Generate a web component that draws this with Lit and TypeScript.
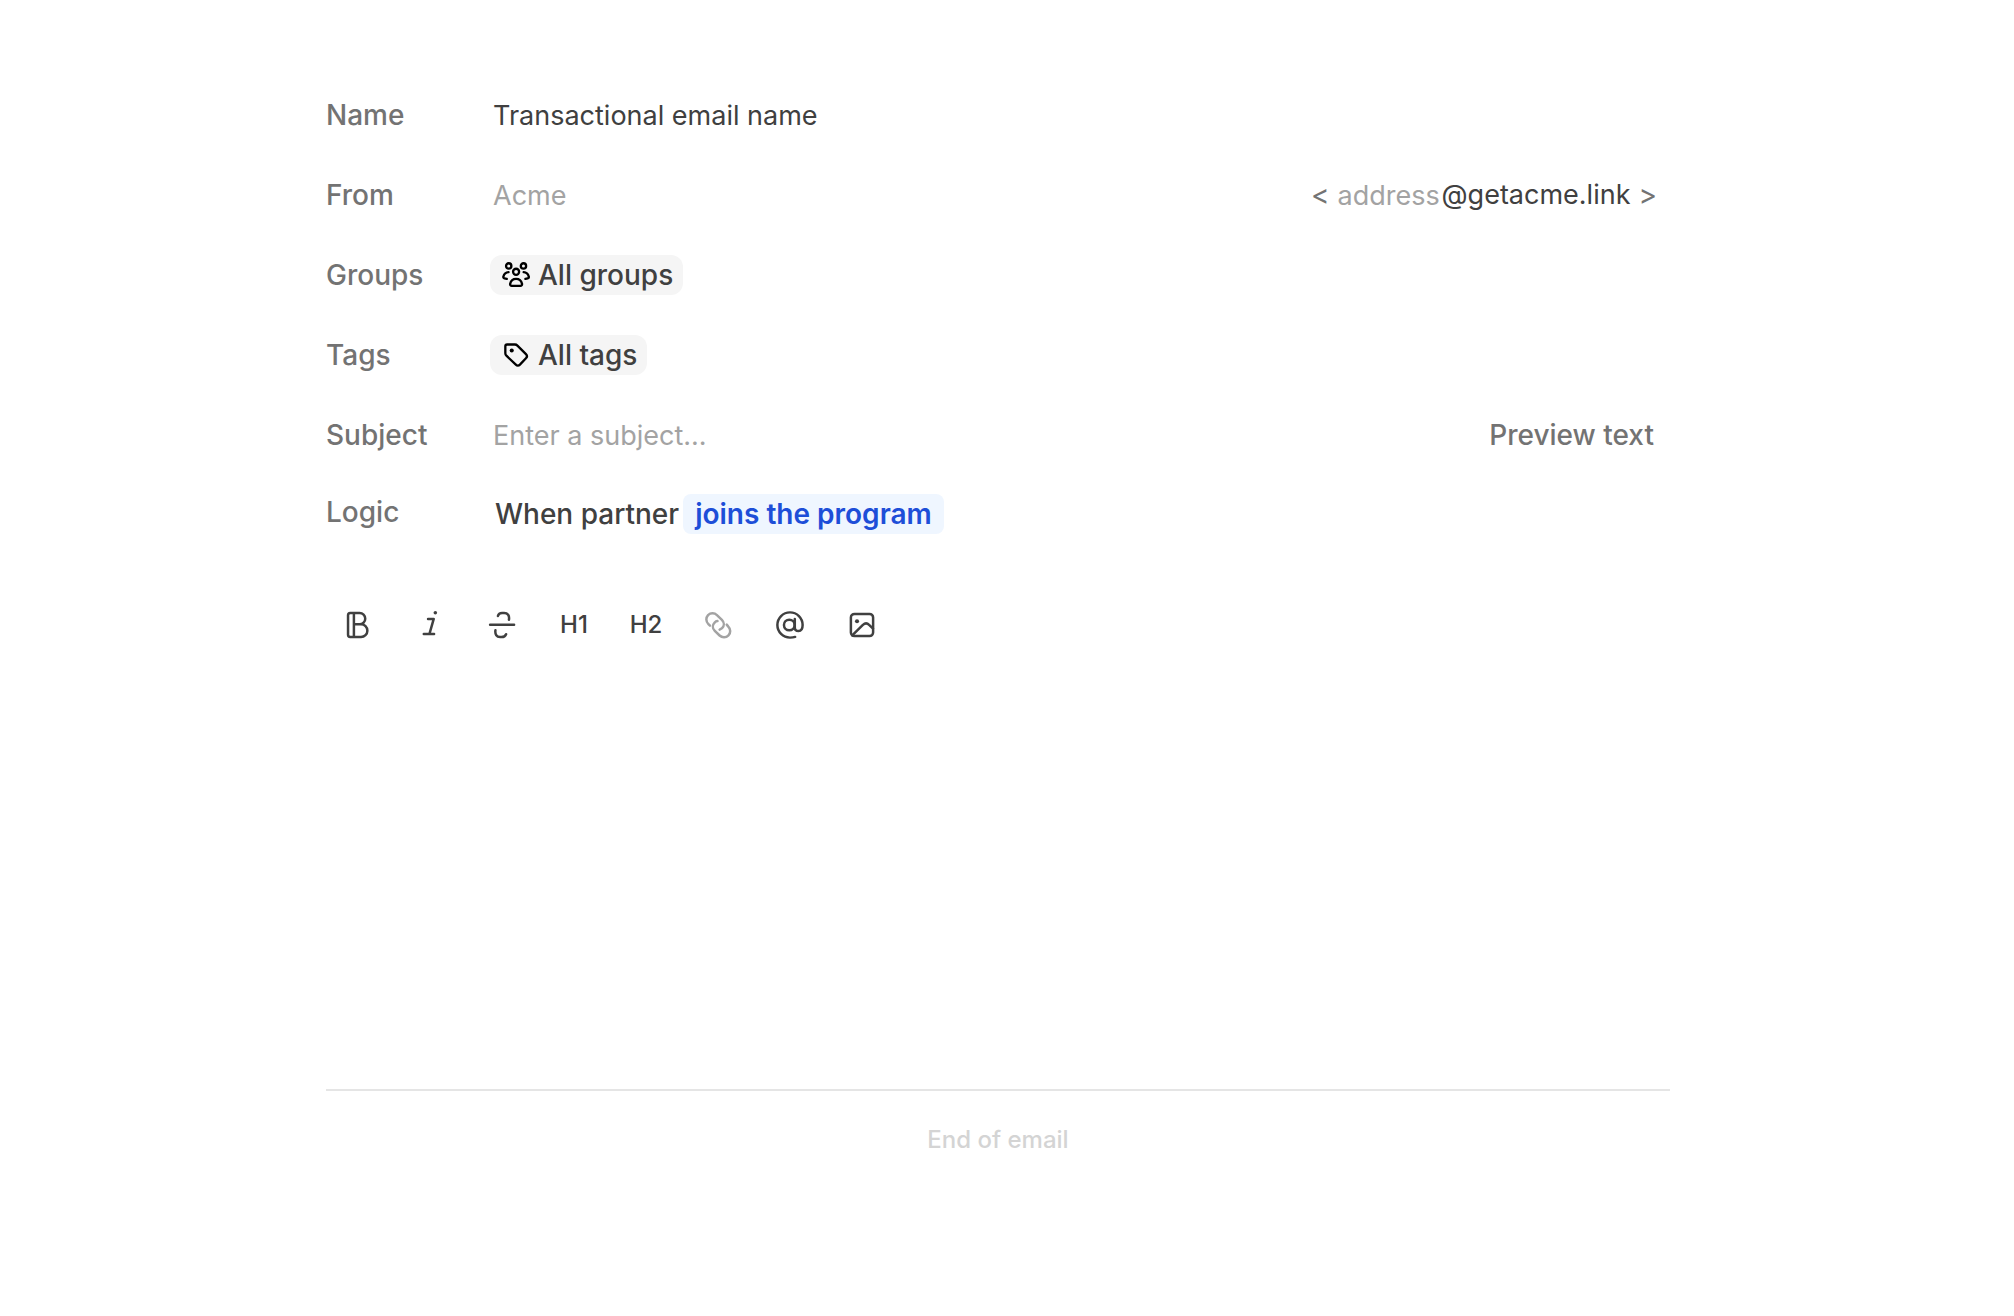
import { LitElement, html, css, svg } from "lit";
import { customElement, property } from "lit/decorators.js";

const icons: Record<string, unknown> = {
  bold: svg`<path d="M6.7 8.6H9.9A3.17 3.17 0 0 0 9.9 2.25H4.6A1.25 1.25 0 0 0 3.4 3.5V14.5A1.25 1.25 0 0 0 4.6 15.75H10.7A3.57 3.57 0 0 0 10.7 8.6H9.9M6.7 2.25V15.75" />`,
  italic: svg`<path d="M7.9 5.6H11.1L8.7 14M5.5 14.1H11.3" /><circle class="fill" cx="12" cy="2.1" r="1" />`,
  strike: svg`<path d="M2.3 8.8H15.8M6.7 3.9C7 2.7 7.8 2.2 9 2.2H10.2C12.2 2.2 13.3 3.7 12.9 6M5.3 12C5 14.4 6 15.8 7.9 15.8H8.7C10.1 15.8 10.9 15.3 11.3 14.2" />`,
  link: svg`<path d="M4.5 9.4L3.6 8.5C2.1 7 2.1 4.8 3.4 3.4C4.8 2.1 7 2.1 8.4 3.4L11.2 6.1C12.6 7.5 12.6 9.5 11.3 10.8C10.9 11.2 10.4 11.4 9.9 11.6M8.7 6.8C8 6.9 7.5 7.2 7.1 7.6C5.8 8.9 5.8 10.9 7.2 12.3L9.9 14.9C11.3 16.2 13.5 16.2 14.9 14.8C16.2 13.5 16.2 11.3 14.8 9.9L13.9 8.8" />`,
  at: svg`<circle cx="8.6" cy="9" r="3" /><path d="M11.7 5.6V10.2C11.7 11.5 12.5 12.4 13.8 12.4C15.2 12.4 16.1 11.1 16.1 9A7.1 7.1 0 1 0 9 16.1C10 16.1 11 16 11.9 15.7" />`,
  image: svg`<rect x="2.75" y="2.75" width="12.5" height="12.5" rx="2" /><path d="M3.5 14.9L9.5 8.9C10.6 7.9 12 7.9 13 8.9L15.2 11" /><circle class="fill" cx="6.2" cy="6.9" r="1.15" />`,
  groups: svg`<circle cx="4.9" cy="3.9" r="1.5" /><circle cx="13.2" cy="3.9" r="1.5" /><circle cx="9.05" cy="7.2" r="1.7" /><path d="M5.7 14C6.1 12.3 7.4 11.2 9.05 11.2S12 12.3 12.4 14C12.5 14.7 12.1 15.1 11.5 15.1H6.6C6 15.1 5.6 14.7 5.7 14ZM4.8 7.4C3.4 7.5 2.3 8.5 1.9 9.9C1.8 10.4 2 10.8 2.5 10.9L3.8 11.2M13.3 7.4C14.7 7.5 15.8 8.5 16.2 9.9C16.3 10.4 16.1 10.8 15.6 10.9L14.3 11.2" />`,
  tag: svg`<path d="M3 4.1A1 1 0 0 1 4 3.1H8.4C9 3.1 9.4 3.3 9.8 3.7L14.6 8.5C15.3 9.2 15.3 10.1 14.6 10.8L11.2 14.4C10.5 15.1 9.6 15.1 8.9 14.4L3.6 9.4C3.2 9 3 8.6 3 8Z" /><circle class="fill" cx="6.6" cy="6.5" r="1.15" />`,
};

@customElement("app-icon")
class AppIcon extends LitElement {
  @property() name = "";
  static styles = css`
    :host {
      display: block;
      flex: none;
      width: 32px;
      height: 32px;
      stroke-width: 1.4;
    }
    svg {
      display: block;
      width: 100%;
      height: 100%;
      fill: none;
      stroke: currentColor;
      stroke-linecap: round;
      stroke-linejoin: round;
      overflow: visible;
    }
    .fill {
      fill: currentColor;
      stroke: none;
    }
  `;
  render() {
    return html`<svg viewBox="0 0 18 18" aria-hidden="true">${icons[this.name]}</svg>`;
  }
}

@customElement("app-root")
class AppRoot extends LitElement {
  static styles = css`
    :host {
      display: block;
      min-height: 100vh;
      background: #fff;
      color: #404040;
      font: 400 28px/40px Inter, "Liberation Sans", sans-serif;
    }
    * {
      box-sizing: border-box;
    }
    .page {
      max-width: 1362px;
      margin: 0 auto;
      padding: 75px 18px 0 0;
    }
    .row {
      display: grid;
      grid-template-columns: 164px 1fr auto;
      align-items: center;
      height: 80px;
      padding-right: 13px;
    }
    .row.logic {
      height: 78px;
    }
    .label {
      color: #737373;
      font-weight: 500;
    }
    .logic .label {
      padding-bottom: 5px;
    }
    button,
    input {
      margin: 0;
      border: 0;
      padding: 0;
      background: none;
      color: inherit;
      font: inherit;
    }
    button {
      cursor: pointer;
    }
    input {
      width: 100%;
      min-width: 0;
      height: 40px;
      padding: 2px 0 0 3px;
      outline: none;
      font-size: 27px;
    }
    input::placeholder {
      color: #a3a3a3;
      opacity: 1;
    }
    .chip {
      display: flex;
      align-items: center;
      justify-self: start;
      gap: 6px;
      height: 40px;
      padding: 0 10px;
      border-radius: 12px;
      background: #f5f5f5;
      font-weight: 500;
    }
    .chip app-icon {
      color: #000;
      stroke-width: 1.3;
    }
    .address {
      display: flex;
      align-items: center;
      gap: 8px;
      color: #737373;
    }
    .mail {
      display: flex;
      color: #404040;
      font-size: 27px;
    }
    .mail input {
      width: 104px;
      padding-left: 0;
    }
    .preview {
      padding-right: 3px;
      color: #737373;
      font-weight: 500;
    }
    .rule {
      display: flex;
      align-items: center;
      gap: 4px;
      padding-left: 5px;
      font-weight: 500;
    }
    .trigger {
      height: 40px;
      padding: 0 12px;
      border-radius: 8px;
      background: #eff6ff;
      color: #1d4ed8;
      font-weight: 600;
    }
    .tools {
      display: flex;
      gap: 16px;
      margin-top: 44px;
      padding-left: 4px;
    }
    .tool {
      display: grid;
      place-items: center;
      width: 56px;
      height: 56px;
      font-size: 24px;
      font-weight: 500;
    }
    .tool:disabled {
      color: #a3a3a3;
    }
    .editor {
      height: 436px;
      outline: none;
    }
    .end {
      border-top: 2px solid #e5e5e5;
      padding-top: 29px;
      color: #d4d4d4;
      font-size: 24px;
      font-weight: 500;
      text-align: center;
    }
  `;

  render() {
    const tool = (name: string, label: string, disabled = false) => html`
      <button class="tool" type="button" aria-label=${label} ?disabled=${disabled}>
        <app-icon name=${name}></app-icon>
      </button>
    `;
    return html`
      <main class="page">
        <div class="row">
          <label class="label" for="name">Name</label>
          <input id="name" type="text" value="Transactional email name" />
        </div>
        <div class="row">
          <label class="label" for="from">From</label>
          <input id="from" type="text" placeholder="Acme" />
          <div class="address">
            <span>&lt;</span>
            <div class="mail">
              <input type="text" placeholder="address" aria-label="Address" />
              <span>@getacme.link</span>
            </div>
            <span>&gt;</span>
          </div>
        </div>
        <div class="row">
          <label class="label" for="groups">Groups</label>
          <button class="chip" id="groups" type="button">
            <app-icon name="groups"></app-icon>All groups
          </button>
        </div>
        <div class="row">
          <label class="label" for="tags">Tags</label>
          <button class="chip" id="tags" type="button">
            <app-icon name="tag"></app-icon>All tags
          </button>
        </div>
        <div class="row">
          <label class="label" for="subject">Subject</label>
          <input id="subject" type="text" placeholder="Enter a subject..." />
          <button class="preview" type="button">Preview text</button>
        </div>
        <div class="row logic">
          <label class="label" for="trigger">Logic</label>
          <div class="rule">
            <span>When partner</span>
            <button class="trigger" id="trigger" type="button">joins the program</button>
          </div>
        </div>
        <div class="tools" role="toolbar" aria-label="Formatting">
          ${tool("bold", "Bold")} ${tool("italic", "Italic")} ${tool("strike", "Strikethrough")}
          <button class="tool" type="button">H1</button>
          <button class="tool" type="button">H2</button>
          ${tool("link", "Link", true)} ${tool("at", "Variable")} ${tool("image", "Image")}
        </div>
        <div class="editor" contenteditable="true" role="textbox" aria-label="Email body"></div>
        <footer class="end">End of email</footer>
      </main>
    `;
  }
}
